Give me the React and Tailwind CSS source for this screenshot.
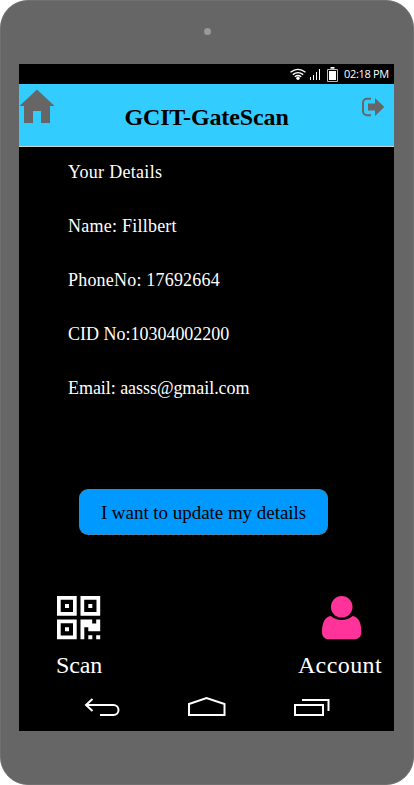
const SERIF = 'font-["Liberation_Serif",serif]';

const details = [
  { text: 'Your Details', cls: 'tracking-[0.3px]' },
  { text: 'Name: Fillbert', cls: 'tracking-[0.24px]' },
  { text: 'PhoneNo: 17692664', cls: 'tracking-[0.2px]' },
  { text: 'CID No:10304002200', cls: 'tracking-[-0.01px]' },
  { text: 'Email: aasss@gmail.com', cls: 'tracking-[-0.05px]' },
];

function StatusBar() {
  return (
    <div className="flex h-5 shrink-0 items-center pl-[271px] text-white">
      <svg width="50" height="20" viewBox="290 64 50 20" fill="none" stroke="#fff">
        <path d="M290.500 72.200Q298 66.600 305.500 72.200M292.800 74.600Q298 70.600 303.200 74.600M294.800 76.800Q298 74.200 301.200 76.800" strokeWidth="1.4" />
        <circle cx="298" cy="78.200" r="1.700" fill="#fff" stroke="none" />
        <path d="M310.500 80v-3M313.500 80v-5M316.500 80v-8M319.500 80v-11" strokeWidth="1" />
        <path d="M327.500 69.500h10v12h-10z" stroke="#bbb" />
        <path d="M329 71h7v9h-7zM330.500 67h4v1.800h-4z" fill="#fff" stroke="none" />
      </svg>
      <span className='ml-[4px] font-["Open_Sans",sans-serif] text-[11px] leading-5 whitespace-nowrap tracking-[-0.33px]'>02:18 PM</span>
    </div>
  );
}

function Header() {
  return (
    <header className="flex h-[63px] shrink-0 justify-between border-b border-[#d0d0d0] bg-[#33ccff]">
      <svg className="mt-[5px]" width="36" height="35" viewBox="19 89 36 35" fill="#666">
        <path d="M37 89.500L54.500 106H50v17h-9v-12h-8v12h-9v-17H19.500z" />
      </svg>
      <h1 className={`${SERIF} mt-[18px] mr-[3px] text-[24px] leading-[30px] font-bold tracking-[-0.12px] whitespace-nowrap text-black`}>GCIT-GateScan</h1>
      <svg className="mt-[13px] mr-[9px]" width="24" height="20" viewBox="361 97 24 20" fill="#666">
        <path d="M371 98.800h-4a4 4 0 0 0-4 4v8.400a4 4 0 0 0 4 4h4" fill="none" stroke="#666" strokeWidth="2" />
        <path d="M368 103.500h7v-5.500l9.300 9-9.300 9v-5.500h-7z" />
      </svg>
    </header>
  );
}

function QrIcon() {
  return (
    <svg width="44" height="44" viewBox="0 0 44 44" fill="#fff" fillRule="evenodd">
      <path d="M0 0h19.700v19.700H0zM3.700 3.700v12.300h12.300V3.700zM8 8h4v4H8z" />
      <path d="M23.500 0H43.200v19.700H23.500zM27.200 3.700v12.300h12.300V3.700zM31.300 8h4v4h-4z" />
      <path d="M0 23.500h19.700v19.700H0zM3.700 27.200v12.300h12.300V27.200zM8 31.300h4v4H8z" />
      <path d="M23.500 23.500h11.700v4h4v-4h4v11.800H31.300v-4h-4v11.900h-3.800zM31.300 39.200h4v4h-4zM39.200 39.200h4v4h-4z" />
    </svg>
  );
}

function AccountIcon() {
  return (
    <svg width="40" height="44" viewBox="0 0 40 44" fill="#ff3399">
      <circle cx="19.700" cy="10.800" r="10.800" />
      <path d="M8.800 20C3 20.500 0 27 0 36c0 4.500 2.500 7.200 6.500 7.200h26.200c4 0 6.700-2.700 6.700-7.200 0-9-3-15.500-8.800-16-6.300 5.200-15.500 5.200-21.800 0z" />
    </svg>
  );
}

function NavBar() {
  return (
    <svg width="375" height="46" viewBox="19 685 375 46" fill="none" stroke="#fff" strokeWidth="2">
      <path d="M92.500 699L86 705l6.500 6M86 705h27.500a5 5 0 0 1 0 10H100" />
      <path d="M189 704l17.500-6 18 6v11H189z" />
      <path d="M295 705h28v10h-28zM302 700h26.500v11" />
    </svg>
  );
}

export default function App() {
  return (
    <div className="h-[785px] w-[414px] overflow-hidden bg-white">
      <div className="flex h-full flex-col rounded-[28px] border border-[#707070] bg-[#666] px-[18px]">
        <div className="flex h-[63px] shrink-0 justify-center pt-[27px]">
          <div className="h-[7px] w-[7px] rounded-full bg-[#999]" />
        </div>
        <main className="flex h-[667px] w-[375px] shrink-0 flex-col bg-black">
          <StatusBar />
          <Header />
          <div className="h-[342px] shrink-0 pl-[49px] text-white">
            {details.map((row) => (
              <div key={row.text} className={`${SERIF} flex h-[54px] items-center pb-1 text-[18px]`}>
                <span className={`${row.cls} whitespace-nowrap`}>{row.text}</span>
              </div>
            ))}
          </div>
          <button className={`${SERIF} ml-[60px] flex h-[46px] w-[249px] shrink-0 items-center justify-center rounded-[9px] border border-dashed border-[#797979] bg-[#0099ff] pt-0.5 text-[19px] tracking-[-0.04px] whitespace-nowrap text-black`}>
            I want to update my details
          </button>
          <div className={`${SERIF} mt-[61px] flex h-[89px] shrink-0 justify-between pr-[12px] pl-[37px] text-[24px] leading-7 text-white`}>
            <div className="flex flex-col items-start">
              <div className="ml-[1px]"><QrIcon /></div>
              <span className="mt-[11px] tracking-[-0.1px]">Scan</span>
            </div>
            <div className="flex flex-col items-center">
              <div className="ml-[4px]"><AccountIcon /></div>
              <span className="mt-[11px] tracking-[0.4px]">Account</span>
            </div>
          </div>
          <NavBar />
        </main>
      </div>
    </div>
  );
}
